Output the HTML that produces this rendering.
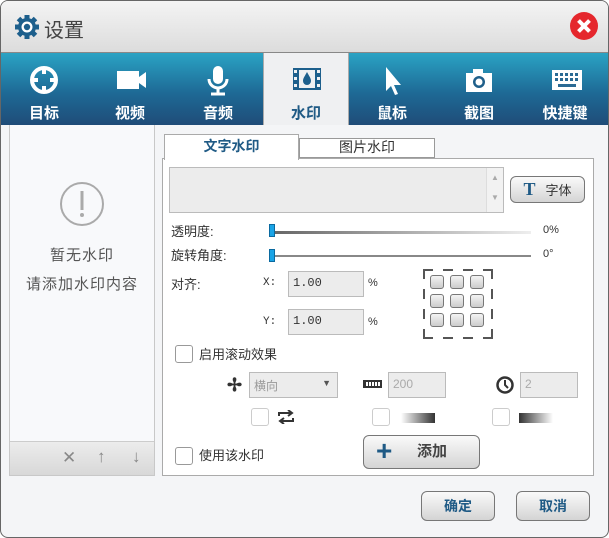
<!DOCTYPE html>
<html><head><meta charset="utf-8"><style>
*{margin:0;padding:0;box-sizing:border-box}
body{width:609px;height:538px;background:#fff;font-family:"Liberation Sans","Noto Sans CJK SC",sans-serif;font-size:13px;color:#333;position:relative;overflow:hidden}
.win{position:absolute;left:0;top:0;width:609px;height:538px;border:1px solid #666;border-radius:8px;background:#f4f5f7;overflow:hidden}
.title{position:absolute;left:0;top:0;width:607px;height:52px;background:linear-gradient(#f4f4f4,#dcdcdc);border-bottom:1px solid #888}
.title span{position:absolute;left:43px;top:13px;font-size:20px;color:#444}
.tabs{position:absolute;left:0;top:52px;width:607px;height:72px;background:linear-gradient(#2aa3c4,#1e6a96 55%,#1f4c78)}
.tab{position:absolute;top:0;width:86px;height:72px;text-align:center;color:#fff;font-weight:bold;font-size:15px}
.tab .lb{position:absolute;left:0;right:0;top:49px}
.tab svg{position:absolute;left:28px;top:12px}
.tab.act{background:#eff0f2;color:#1f5a85;border-left:1px solid #aaa;border-right:1px solid #aaa}
.abs{position:absolute}
.left{left:8px;top:124px;width:146px;height:351px;background:#f8f9fb;border:1px solid #c8c8c8;border-top:none}
.right{left:161px;top:157px;width:432px;height:318px;background:#fff;border:1px solid #aaa}
.inp{background:#ececec;border:1px solid #bbb;font-family:"Liberation Mono",monospace;font-size:12px;padding:4px}
.cb{width:18px;height:18px;border:1px solid #999;border-radius:3px;background:#fff}
.btn{border:1px solid #777;border-radius:6px;background:linear-gradient(#fafafa,#d4d4d4);font-weight:bold;color:#1f5a85;text-align:center}
.sq{width:14px;height:14px;border:1px solid #777;border-radius:3px;background:linear-gradient(#f4f4f4,#ccc)}
.lbl{font-size:13px;color:#333}
</style></head><body><div class="win">
<div class="title">
<svg class="abs" style="left:13px;top:13px" width="26" height="26" viewBox="0 0 26 26"><g fill="#1d5f8c"><circle cx="13" cy="13" r="9"/><g stroke="#1d5f8c" stroke-width="5"><line x1="13" y1="1" x2="13" y2="25"/><line x1="1" y1="13" x2="25" y2="13"/><line x1="4.5" y1="4.5" x2="21.5" y2="21.5"/><line x1="21.5" y1="4.5" x2="4.5" y2="21.5"/></g></g><circle cx="13" cy="13" r="5.5" fill="#fff"/><circle cx="13" cy="13" r="3.2" fill="#1d5f8c"/></svg>
<span>设置</span>
<svg class="abs" style="left:568px;top:10px" width="30" height="30" viewBox="0 0 30 30"><circle cx="15" cy="15" r="14" fill="#e5272d"/><path d="M9.5 9.5L20.5 20.5M20.5 9.5L9.5 20.5" stroke="#fff" stroke-width="4"/></svg>
</div>
<div class="tabs">
<div class="tab" style="left:0"><svg width="30" height="30" viewBox="0 0 30 30"><circle cx="15" cy="15" r="12" fill="none" stroke="#fff" stroke-width="4"/><g stroke="#fff" stroke-width="4"><line x1="15" y1="3" x2="15" y2="9"/><line x1="15" y1="21" x2="15" y2="27"/><line x1="3" y1="15" x2="9" y2="15"/><line x1="21" y1="15" x2="27" y2="15"/></g></svg><div class="lb">目标</div></div>
<div class="tab" style="left:86px"><svg width="34" height="30" viewBox="0 0 34 30"><rect x="2" y="6" width="22" height="18" fill="#fff"/><path d="M24 12L31 7V23L24 18Z" fill="#fff"/></svg><div class="lb">视频</div></div>
<div class="tab" style="left:174px"><svg width="30" height="32" viewBox="0 0 30 32"><rect x="10" y="1" width="10" height="18" rx="5" fill="#fff"/><path d="M6 14a9 9 0 0 0 18 0" fill="none" stroke="#fff" stroke-width="3"/><line x1="15" y1="23" x2="15" y2="28" stroke="#fff" stroke-width="3"/><line x1="8" y1="29" x2="22" y2="29" stroke="#fff" stroke-width="3"/></svg><div class="lb">音频</div></div>
<div class="tab act" style="left:262px;width:86px"><svg width="30" height="28" viewBox="0 0 30 28"><rect x="1" y="3" width="28" height="22" fill="#1d5f8c"/><rect x="7" y="5" width="16" height="18" fill="#eff0f2"/><g fill="#eff0f2"><rect x="2" y="5" width="3" height="3"/><rect x="2" y="12" width="3" height="3"/><rect x="2" y="19" width="3" height="3"/><rect x="25" y="5" width="3" height="3"/><rect x="25" y="12" width="3" height="3"/><rect x="25" y="19" width="3" height="3"/></g><path d="M15 7C13 11 11 13 11 16a4 4 0 0 0 8 0c0-3-2-5-4-9z" fill="#1d5f8c"/></svg><div class="lb">水印</div></div>
<div class="tab" style="left:348px"><svg width="30" height="32" viewBox="0 0 30 32"><path d="M9 2V26L14 21L18 30L21 29L17 20H24Z" fill="#fff"/></svg><div class="lb">鼠标</div></div>
<div class="tab" style="left:435px"><svg width="30" height="30" viewBox="0 0 30 30"><rect x="2" y="8" width="26" height="19" fill="#fff"/><rect x="9" y="4" width="10" height="5" fill="#fff"/><circle cx="15" cy="17" r="6" fill="#1f5f8a"/><circle cx="15" cy="17" r="3.5" fill="#fff"/></svg><div class="lb">截图</div></div>
<div class="tab" style="left:521px"><svg width="34" height="30" viewBox="0 0 34 30"><rect x="2" y="5" width="30" height="20" fill="#fff"/><g fill="#2a6a94"><rect x="5" y="8" width="3" height="3"/><rect x="10" y="8" width="3" height="3"/><rect x="15" y="8" width="3" height="3"/><rect x="20" y="8" width="3" height="3"/><rect x="25" y="8" width="3" height="3"/><rect x="5" y="13" width="3" height="3"/><rect x="10" y="13" width="3" height="3"/><rect x="15" y="13" width="3" height="3"/><rect x="20" y="13" width="3" height="3"/><rect x="25" y="13" width="3" height="3"/><rect x="8" y="19" width="18" height="3"/></g></svg><div class="lb">快捷键</div></div>
</div>

<div class="abs left">
<svg class="abs" style="left:49px;top:56px" width="46" height="46" viewBox="0 0 46 46"><circle cx="23" cy="23" r="21" fill="none" stroke="#aaa" stroke-width="2"/><rect x="21.5" y="10" width="3" height="19" fill="#aaa"/><circle cx="23" cy="34" r="2" fill="#aaa"/></svg>
<div class="abs" style="left:0;width:144px;top:119px;text-align:center;font-size:15px;color:#555;letter-spacing:1px">暂无水印</div>
<div class="abs" style="left:0;width:144px;top:148px;text-align:center;font-size:15px;color:#555;letter-spacing:1px">请添加水印内容</div>
<div class="abs" style="left:0;top:316px;width:144px;height:34px;background:linear-gradient(#ececec,#d8d8d8);border-top:1px solid #ccc;color:#888;font-size:17px">
<span class="abs" style="left:52px;top:6px">✕</span><span class="abs" style="left:87px;top:5px">↑</span><span class="abs" style="left:122px;top:5px">↓</span></div>
</div>

<div class="abs right"></div>
<div class="abs" style="left:163px;top:133px;width:135px;height:26px;background:#fff;border:1px solid #aaa;border-bottom:none;text-align:center;font-weight:bold;color:#1f5a85;font-size:14px;padding-top:1px">文字水印</div>
<div class="abs" style="left:298px;top:137px;width:136px;height:20px;background:#fff;border:1px solid #999;text-align:center;font-size:14px;color:#333;line-height:17px">图片水印</div>

<div class="abs" style="left:168px;top:166px;width:335px;height:46px;background:#ececec;border:1px solid #bbb"></div>
<div class="abs" style="left:485px;top:167px;width:17px;height:44px;background:#f2f2f2;border-left:1px solid #ddd;font-size:8px;color:#aaa;text-align:center;line-height:20px">▲<br>▼</div>
<div class="abs btn" style="left:509px;top:175px;width:75px;height:27px;color:#333;font-weight:normal;line-height:25px;font-size:13px"><b style="font-family:'Liberation Serif',serif;color:#1f5a85;font-size:18px;margin-right:10px">T</b>字体</div>

<div class="abs lbl" style="left:170px;top:220px">透明度:</div>
<div class="abs" style="left:272px;top:230px;width:258px;height:3px;background:linear-gradient(90deg,#666,#eee)"></div>
<div class="abs" style="left:268px;top:223px;width:6px;height:13px;background:#1aa4e6;border:1px solid #0a6aa0"></div>
<div class="abs lbl" style="left:542px;top:223px;font-size:11px">0%</div>
<div class="abs lbl" style="left:170px;top:244px">旋转角度:</div>
<div class="abs" style="left:272px;top:254px;width:258px;height:2px;background:#888"></div>
<div class="abs" style="left:268px;top:248px;width:6px;height:13px;background:#1aa4e6;border:1px solid #0a6aa0"></div>
<div class="abs lbl" style="left:542px;top:247px;font-size:11px">0°</div>
<div class="abs lbl" style="left:170px;top:273px">对齐:</div>
<div class="abs" style="left:262px;top:276px;font-family:'Liberation Mono',monospace;font-size:11px">X:</div>
<div class="abs inp" style="left:287px;top:270px;width:76px;height:26px">1.00</div>
<div class="abs" style="left:367px;top:276px;font-size:11px">%</div>
<div class="abs" style="left:262px;top:315px;font-family:'Liberation Mono',monospace;font-size:11px">Y:</div>
<div class="abs inp" style="left:287px;top:308px;width:76px;height:26px">1.00</div>
<div class="abs" style="left:367px;top:315px;font-size:11px">%</div>
<svg class="abs" style="left:422px;top:268px" width="70" height="70" viewBox="0 0 70 70"><g fill="none" stroke="#555" stroke-width="2"><path d="M1 10V1H10M20 1H30M40 1H50M60 1H69V10M1 20V30M69 20V30M1 40V50M69 40V50M1 60V69H10M20 69H30M40 69H50M60 69H69V60"/></g></svg>
<div class="abs" style="left:429px;top:274px;width:58px"><div style="display:grid;grid-template-columns:repeat(3,15px);gap:5px 5px">
<div class="sq"></div><div class="sq"></div><div class="sq"></div><div class="sq"></div><div class="sq"></div><div class="sq"></div><div class="sq"></div><div class="sq"></div><div class="sq"></div></div></div>

<div class="abs cb" style="left:174px;top:344px"></div>
<div class="abs lbl" style="left:198px;top:343px">启用滚动效果</div>
<div class="abs" style="left:226px;top:374px;font-size:18px;color:#333;font-weight:bold">✢</div>
<div class="abs inp" style="left:248px;top:371px;width:89px;height:26px;color:#999;font-family:'Liberation Sans','Noto Sans CJK SC',sans-serif">横向<span style="position:absolute;right:6px;top:5px;font-size:9px;color:#555">▼</span></div>
<div class="abs" style="left:362px;top:379px;width:19px;height:8px;border:2px solid #333;background:repeating-linear-gradient(90deg,#333 0 1px,#fff 1px 3px)"></div>
<div class="abs inp" style="left:387px;top:371px;width:58px;height:26px;color:#aaa;font-family:'Liberation Sans',sans-serif">200</div>
<svg class="abs" style="left:495px;top:375px" width="18" height="18" viewBox="0 0 18 18"><circle cx="9" cy="9" r="7.5" fill="none" stroke="#333" stroke-width="2.5"/><path d="M9 4V9L12 12" stroke="#333" stroke-width="2" fill="none"/></svg>
<div class="abs inp" style="left:519px;top:371px;width:58px;height:26px;color:#aaa;font-family:'Liberation Sans',sans-serif">2</div>
<div class="abs cb" style="left:250px;top:407px;border-color:#ccc"></div>
<svg class="abs" style="left:276px;top:409px" width="18" height="14" viewBox="0 0 18 14"><path d="M2 6V3H14M11 0L15 3L11 6M16 8V11H4M7 8L3 11L7 14" fill="none" stroke="#333" stroke-width="2"/></svg>
<div class="abs cb" style="left:371px;top:407px;border-color:#ccc"></div>
<div class="abs" style="left:400px;top:412px;width:34px;height:10px;background:linear-gradient(90deg,#fff,#333)"></div>
<div class="abs cb" style="left:491px;top:407px;border-color:#ccc"></div>
<div class="abs" style="left:518px;top:412px;width:34px;height:10px;background:linear-gradient(90deg,#333,#fff)"></div>

<div class="abs cb" style="left:174px;top:446px"></div>
<div class="abs lbl" style="left:198px;top:444px">使用该水印</div>
<div class="abs btn" style="left:362px;top:434px;width:117px;height:34px;color:#444;font-size:15px;line-height:32px"><span style="color:#1f5a85;font-size:28px;position:absolute;left:12px;top:-1px;font-weight:bold">+</span><span style="position:absolute;left:53px">添加</span></div>

<div class="abs btn" style="left:420px;top:490px;width:74px;height:30px;line-height:28px;font-size:14px">确定</div>
<div class="abs btn" style="left:515px;top:490px;width:74px;height:30px;line-height:28px;font-size:14px">取消</div>
</div></body></html>
